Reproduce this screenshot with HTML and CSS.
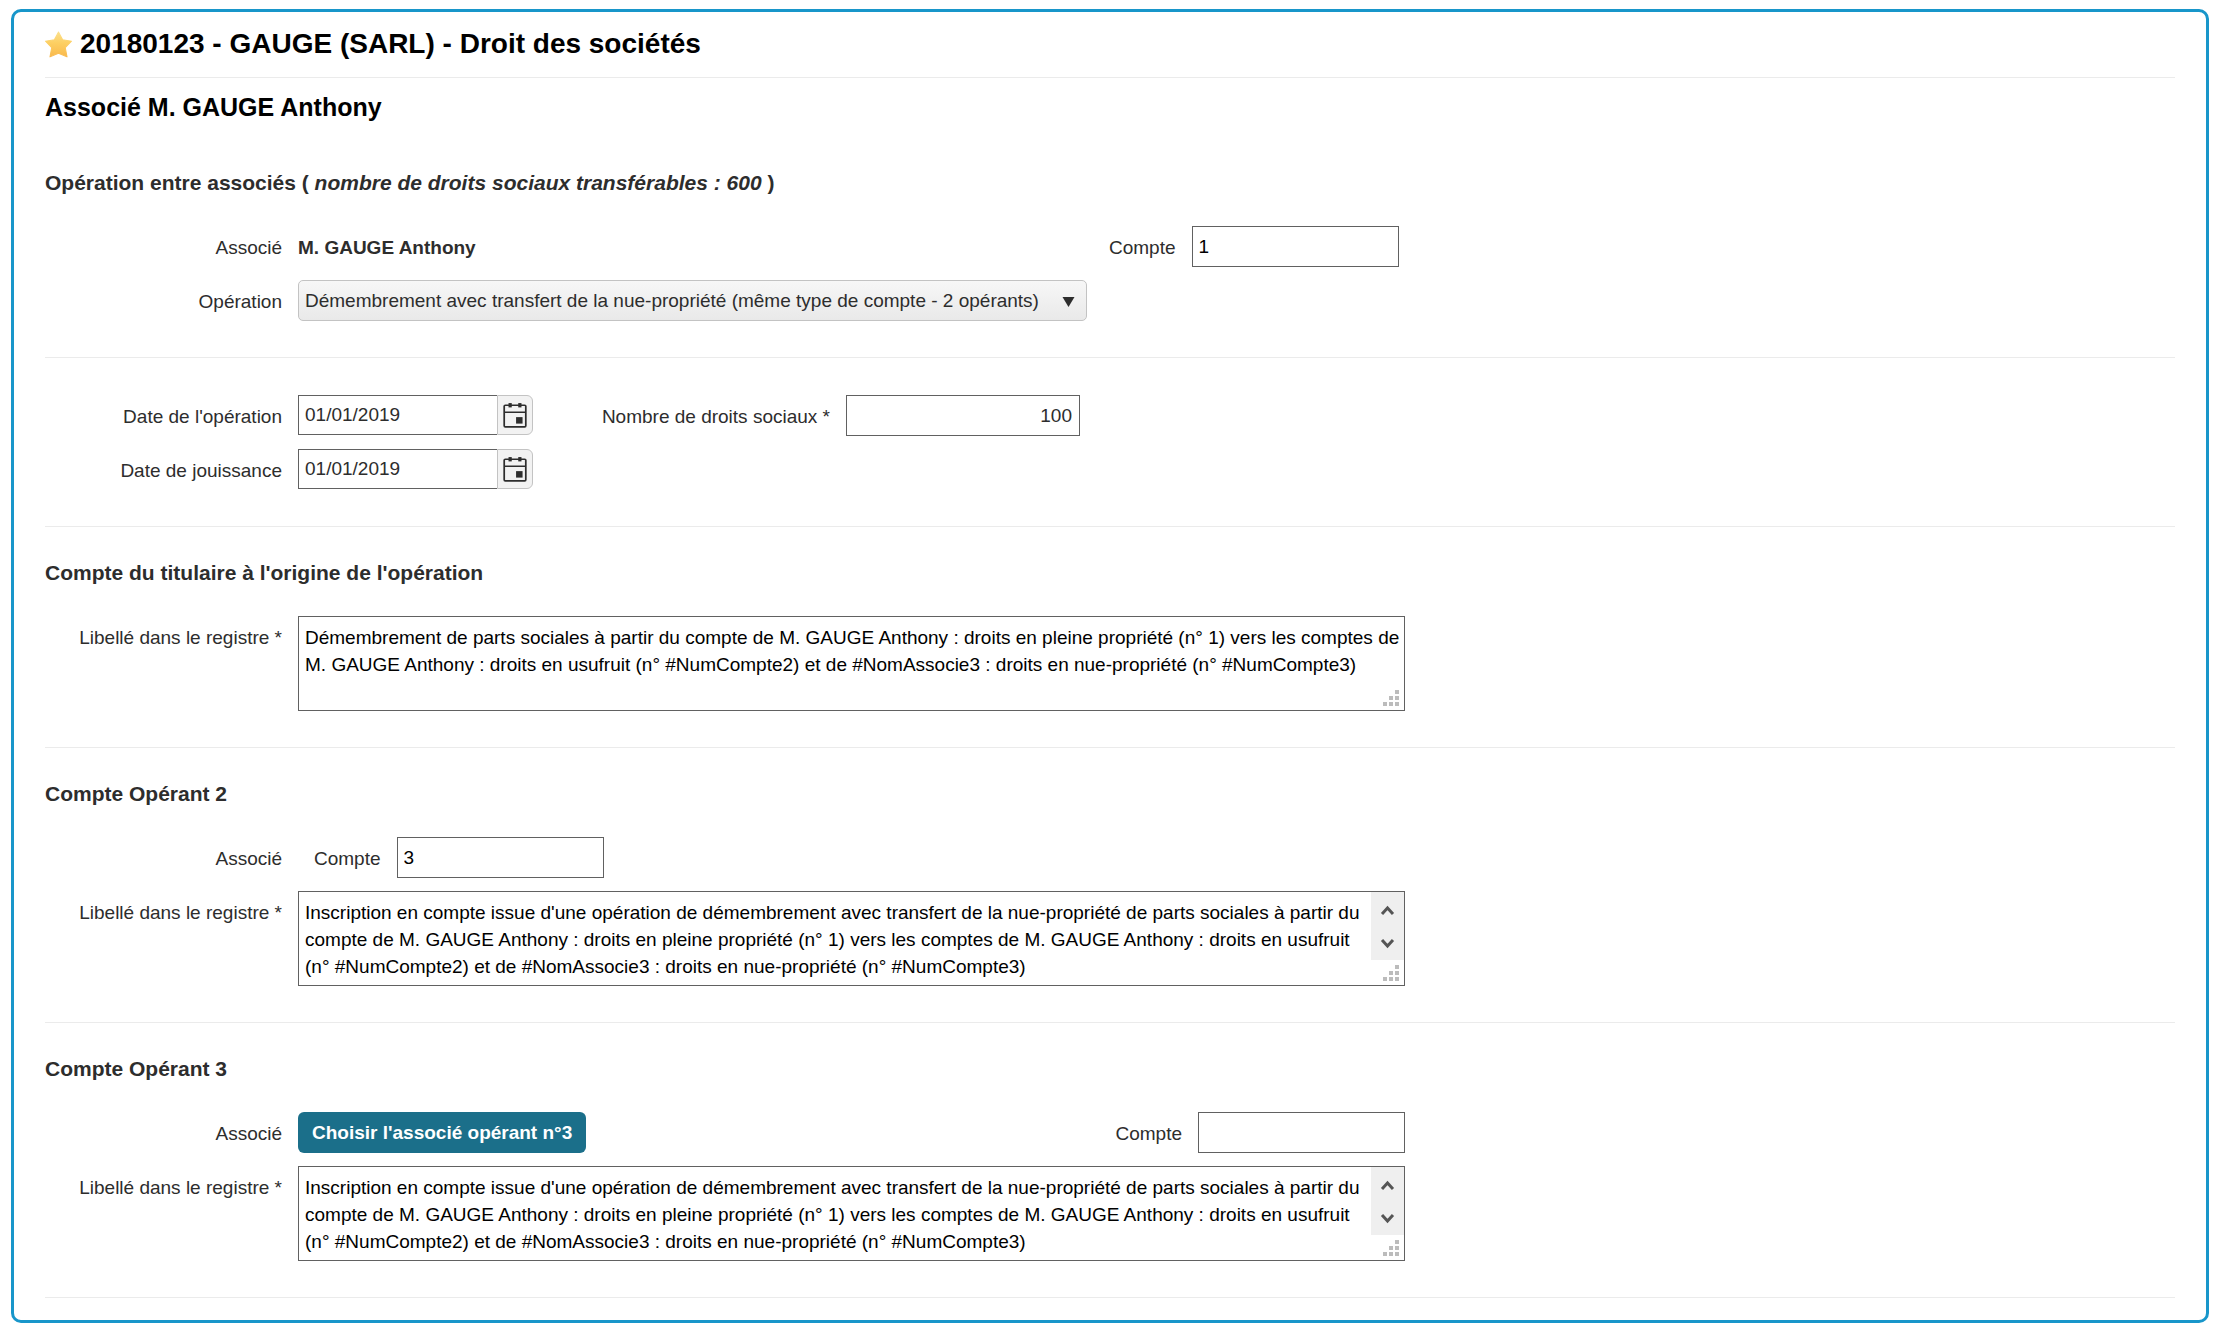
FILE: index.html
```html
<!DOCTYPE html>
<html lang="fr">
<head>
    <meta charset="UTF-8">
    <meta name="viewport" content="width=device-width, initial-scale=1.0">
    <title>20180123 - GAUGE (SARL) - Droit des sociétés</title>
    <link rel="stylesheet" href="styles.css">
</head>
<body>
    <svg class="sprite" aria-hidden="true">
        <symbol id="calendar" viewBox="0 0 24 25">
            <rect x="2" y="3" width="20" height="20" rx="1" fill="none" stroke="#2d2d2d" stroke-width="1.6"/>
            <path d="M2 9.5h20" stroke="#2d2d2d" stroke-width="1.4"/>
            <rect x="6" y="1" width="3" height="4" fill="#2d2d2d"/>
            <rect x="15" y="1" width="3" height="4" fill="#2d2d2d"/>
            <rect x="13" y="14" width="6" height="6" fill="#2d2d2d"/>
        </symbol>
        <symbol id="grip" viewBox="0 0 16 16">
            <path d="M12 0h4v4h-4zM6 6h4v4H6zM12 6h4v4h-4zM0 12h4v4H0zM6 12h4v4H6zM12 12h4v4h-4z" fill="#bcbcbc"/>
        </symbol>
        <symbol id="arrows" viewBox="0 0 33 68">
            <path d="M11 22l5.500-6 5.500 6M11 48l5.500 6 5.500-6" fill="none" stroke="#555" stroke-width="3"/>
        </symbol>
    </svg>

    <main class="frame">
        <header class="page-header">
            <svg class="star" viewBox="0 0 26 26" aria-hidden="true">
                <defs>
                    <linearGradient id="gold" x1="0" y1="0" x2="0" y2="1">
                        <stop offset="0" stop-color="#fbe08c"/>
                        <stop offset="0.45" stop-color="#fdcf62"/>
                        <stop offset="1" stop-color="#f9b94d"/>
                    </linearGradient>
                </defs>
                <path d="M13 1l4 7.500 8.500 1.300-6 6.100 1.700 9L13 21.500l-8.200 3.400 1.700-9L.5 9.800 9 8.500z" fill="url(#gold)" stroke="url(#gold)" stroke-linejoin="round"/>
            </svg>
            <h1>20180123 - GAUGE (SARL) - Droit des sociétés</h1>
        </header>
        <h2>Associé M. GAUGE Anthony</h2>

        <form>
            <section class="block">
                <h3>Opération entre associés ( <em>nombre de droits sociaux transférables : 600</em> )</h3>
                <div class="row">
                    <span class="label">Associé</span>
                    <div class="fields">
                        <strong class="holder">M. GAUGE Anthony</strong>
                        <label for="compte1">Compte</label>
                        <input type="text" class="compte" id="compte1" value="1">
                    </div>
                </div>
                <div class="row">
                    <label class="label" for="operation">Opération</label>
                    <div class="select">
                        <select id="operation">
                            <option>Démembrement avec transfert de la nue-propriété (même type de compte - 2 opérants)</option>
                        </select>
                        <svg class="caret" viewBox="0 0 12 10" aria-hidden="true"><path d="M0 0h12L6 10z" fill="#2d2d2d"/></svg>
                    </div>
                </div>
            </section>

            <section class="block block-dates">
                <div class="row">
                    <label class="label" for="dateOperation">Date de l'opération</label>
                    <div class="date">
                        <input type="text" id="dateOperation" value="01/01/2019">
                        <button type="button" aria-label="Choisir la date de l'opération"><svg><use href="#calendar"/></svg></button>
                    </div>
                    <label class="label-droits" for="droits">Nombre de droits sociaux *</label>
                    <input type="text" class="droits" id="droits" value="100">
                </div>
                <div class="row">
                    <label class="label" for="dateJouissance">Date de jouissance</label>
                    <div class="date">
                        <input type="text" id="dateJouissance" value="01/01/2019">
                        <button type="button" aria-label="Choisir la date de jouissance"><svg><use href="#calendar"/></svg></button>
                    </div>
                </div>
            </section>

            <section class="block">
                <h3>Compte du titulaire à l'origine de l'opération</h3>
                <div class="row">
                    <label class="label" for="libelle1">Libellé dans le registre *</label>
                    <div class="fields area">
                        <textarea id="libelle1">Démembrement de parts sociales à partir du compte de M. GAUGE Anthony : droits en pleine propriété (n° 1) vers les comptes de M. GAUGE Anthony : droits en usufruit (n° #NumCompte2) et de #NomAssocie3 : droits en nue-propriété (n° #NumCompte3)</textarea>
                        <svg class="grip" aria-hidden="true"><use href="#grip"/></svg>
                    </div>
                </div>
            </section>

            <section class="block">
                <h3>Compte Opérant 2</h3>
                <div class="row">
                    <span class="label">Associé</span>
                    <div class="fields">
                        <strong></strong>
                        <label for="compte2">Compte</label>
                        <input type="text" class="compte" id="compte2" value="3">
                    </div>
                </div>
                <div class="row">
                    <label class="label" for="libelle2">Libellé dans le registre *</label>
                    <div class="fields area area-scroll">
                        <textarea id="libelle2">Inscription en compte issue d'une opération de démembrement avec transfert de la nue-propriété de parts sociales à partir du compte de M. GAUGE Anthony : droits en pleine propriété (n° 1) vers les comptes de M. GAUGE Anthony : droits en usufruit (n° #NumCompte2) et de #NomAssocie3 : droits en nue-propriété (n° #NumCompte3)</textarea>
                        <svg class="scroll" aria-hidden="true"><use href="#arrows"/></svg>
                        <svg class="grip" aria-hidden="true"><use href="#grip"/></svg>
                    </div>
                </div>
            </section>

            <section class="block">
                <h3>Compte Opérant 3</h3>
                <div class="row">
                    <span class="label">Associé</span>
                    <div class="fields fields-spread">
                        <button type="button" class="btn">Choisir l'associé opérant n°3</button>
                        <label for="compte3">Compte</label>
                        <input type="text" class="compte" id="compte3">
                    </div>
                </div>
                <div class="row">
                    <label class="label" for="libelle3">Libellé dans le registre *</label>
                    <div class="fields area area-scroll">
                        <textarea id="libelle3">Inscription en compte issue d'une opération de démembrement avec transfert de la nue-propriété de parts sociales à partir du compte de M. GAUGE Anthony : droits en pleine propriété (n° 1) vers les comptes de M. GAUGE Anthony : droits en usufruit (n° #NumCompte2) et de #NomAssocie3 : droits en nue-propriété (n° #NumCompte3)</textarea>
                        <svg class="scroll" aria-hidden="true"><use href="#arrows"/></svg>
                        <svg class="grip" aria-hidden="true"><use href="#grip"/></svg>
                    </div>
                </div>
            </section>
        </form>
    </main>
</body>
</html>
```

FILE: styles.css
```css
:root {
    --blue: #1896ca;
    --teal: #1b6f8a;
    --text: #2d2d2d;
    --line: #ebebeb;
    --border: #616161;
    --soft-border: #c3c3c3;
}

* {
    margin: 0;
    padding: 0;
    box-sizing: border-box;
    font-family: "Liberation Sans", Arial, sans-serif;
}

body {
    padding: 9px 11px 3px;
    background: #fff;
    color: var(--text);
    font-size: 19px;
    line-height: 27px;
}

.sprite {
    display: none;
}

.frame {
    padding: 16px 31px 22px;
    border: 3px solid var(--blue);
    border-radius: 10px;
}

.page-header {
    display: flex;
    align-items: center;
    gap: 8px;
    padding-bottom: 17px;
    border-bottom: 1px solid var(--line);
}

.star {
    width: 27px;
    height: 27px;
}

h1,
h2 {
    color: #000;
}

h1 {
    font-size: 28px;
    line-height: 32px;
}

h2 {
    margin: 15px 0;
    font-size: 25px;
    line-height: 29px;
}

h3 {
    margin-bottom: 32px;
    font-size: 21px;
    line-height: 23px;
}

/* Form blocks */
.block {
    padding: 34px 0 36px;
    border-bottom: 1px solid var(--line);
}

.block-dates {
    padding: 37px 0;
}

.row {
    display: flex;
    align-items: flex-start;
}

.row + .row {
    margin-top: 13px;
}

.label {
    width: 237px;
    margin-right: 16px;
    text-align: right;
    flex-shrink: 0;
}

label,
.label,
.holder {
    padding-top: 8px;
}

.fields {
    display: flex;
    flex: 1;
    gap: 16px;
    max-width: 1107px;
}

.holder {
    width: 795px;
}

.fields-spread .btn {
    margin-right: auto;
}

/* Controls */
input,
select,
textarea {
    border: 1px solid var(--border);
    background: #fff;
    color: #000;
    font-size: 19px;
    outline: none;
}

input {
    height: 41px;
    padding: 0 7px 0 6px;
}

.compte {
    width: 207px;
}

.label-droits {
    width: 297px;
    margin-right: 16px;
    text-align: right;
}

.droits {
    width: 234px;
    color: var(--text);
    text-align: right;
}

.select {
    position: relative;
}

select {
    display: block;
    width: 789px;
    height: 41px;
    padding: 0 40px 0 6px;
    border-color: var(--soft-border);
    border-radius: 5px;
    background: linear-gradient(#f7f7f7, #e9e9e9);
    color: var(--text);
    appearance: none;
}

.caret {
    position: absolute;
    top: 17px;
    right: 12px;
    width: 13px;
    height: 10px;
    pointer-events: none;
}

.date {
    display: flex;
    width: 235px;
    height: 40px;
}

.date input {
    flex: 1;
    min-width: 0;
    height: 40px;
    border-right: none;
    color: var(--text);
}

.date button {
    display: flex;
    align-items: center;
    justify-content: center;
    width: 36px;
    border: 1px solid var(--soft-border);
    border-radius: 0 6px 6px 0;
    background: #f2f2f2;
    cursor: pointer;
}

.date svg {
    width: 26px;
    height: 27px;
    flex-shrink: 0;
}

.area {
    position: relative;
}

textarea {
    width: 100%;
    height: 95px;
    padding: 7px 2px 5px 6px;
    line-height: 27px;
    resize: none;
    overflow: hidden;
}

.area-scroll textarea {
    padding-right: 36px;
}

.scroll {
    position: absolute;
    top: 1px;
    right: 1px;
    width: 33px;
    height: 68px;
    background: #efefef;
}

.grip {
    position: absolute;
    right: 6px;
    bottom: 5px;
    width: 16px;
    height: 16px;
}

.btn {
    height: 41px;
    padding: 0 14px;
    border: none;
    border-radius: 6px;
    background: var(--teal);
    color: #fff;
    font-size: 19px;
    font-weight: bold;
    cursor: pointer;
}
```
